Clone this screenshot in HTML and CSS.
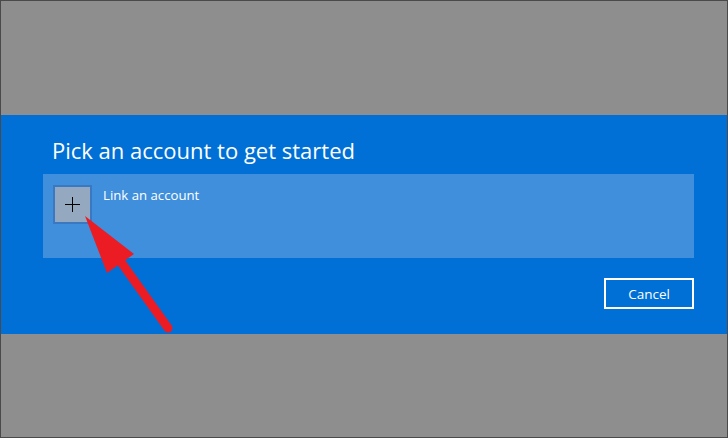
FILE: index.html
```html
<!DOCTYPE html>
<html lang="en">
<head>
    <meta charset="UTF-8">
    <title>Pick an account</title>
    <link rel="stylesheet" href="styles.css">
</head>
<body>
    <div class="screen">
        <div class="dim dim-top"></div>
        <div class="dialog">
            <h1 class="title">Pick an account to get started</h1>
            <div class="accounts">
                <div class="account">
                    <div class="plus-tile">
                        <svg width="15" height="15" viewBox="0 0 15 15">
                            <path d="M7.5 0v15M0 7.5h15" stroke="#000" stroke-width="1" fill="none"/>
                        </svg>
                    </div>
                    <span class="account-name">Link an account</span>
                </div>
            </div>
            <div class="buttons">
                <button class="btn-cancel">Cancel</button>
            </div>
        </div>
        <div class="dim"></div>

        <!-- annotation arrow -->
        <svg class="arrow" width="728" height="438" viewBox="0 0 728 438">
            <line x1="121" y1="262" x2="168" y2="328" stroke="#ec1c24" stroke-width="9" stroke-linecap="round"/>
            <polygon points="85,216 107,273 134,254" fill="#ec1c24"/>
        </svg>
    </div>
</body>
</html>
```

FILE: styles.css
```css
body {
    margin: 0;
    padding: 0;
    font-family: "Open Sans", "Noto Sans", sans-serif;
}
.screen {
    width: 728px;
    height: 438px;
    box-sizing: border-box;
    border: 1px solid #4a4a4a;
    background-color: #8e8e8e;
    display: flex;
    flex-direction: column;
    position: relative;
    overflow: hidden;
}
.dim {
    flex: 1;
}
.dim-top {
    flex: none;
    height: 114px;
}
.dialog {
    height: 219px;
    background-color: #0070d6; /* windows blue */
    box-sizing: border-box;
    padding: 0 33px 0 42px;
    display: flex;
    flex-direction: column;
}
.title {
    margin: 0;
    padding: 16px 0 0 9px;
    height: 43px;
    font-size: 22px;
    font-weight: 400;
    color: #ffffff;
    line-height: 39px;
}
.accounts {
    height: 84px;
    background-color: #3f8fdc;
    box-sizing: border-box;
    padding: 11px 10px;
}
.account {
    display: flex;
    gap: 11px;
}
.plus-tile {
    width: 39px;
    height: 39px;
    box-sizing: border-box;
    border: 2px solid #3a78c2;
    background-color: #94a9c0;
    display: flex;
    align-items: center;
    justify-content: center;
}
.account-name {
    color: #ffffff;
    font-size: 13.2px;
    line-height: 18px;
    margin-top: 1px;
}
.buttons {
    display: flex;
    justify-content: flex-end;
    padding-top: 20px;
}
.btn-cancel {
    width: 90px;
    height: 31px;
    border: 2px solid #ffffff;
    background-color: #0070d6;
    color: #ffffff;
    font-family: "Open Sans", "Noto Sans", sans-serif;
    font-size: 13.5px;
    padding: 0;
}
.arrow {
    position: absolute;
    left: -1px;
    top: -1px;
    pointer-events: none;
}
```
